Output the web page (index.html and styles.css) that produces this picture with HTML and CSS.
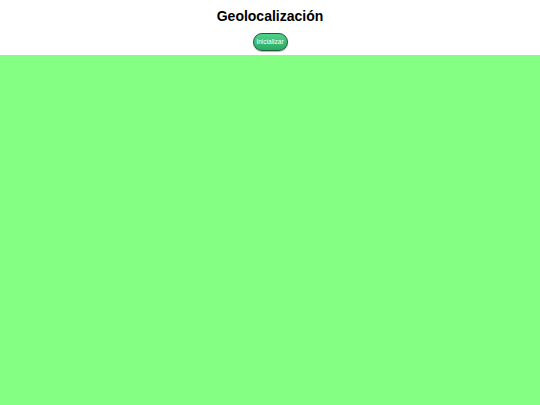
FILE: index.html
```html
<!DOCTYPE html>
<html lang="es">
<head>
<meta charset="utf-8">
<title>Geolocalización</title>
<link rel="stylesheet" href="styles.css">
</head>
<body>
<header class="header">
  <h1 class="title">Geolocalización</h1>
  <button class="btn">Inicializar</button>
</header>
<div class="map"></div>
</body>
</html>
```
FILE: styles.css
```css
html, body {
  margin: 0;
  padding: 0;
  height: 100%;
}
body {
  font-family: "Liberation Sans", Arial, sans-serif;
  display: flex;
  flex-direction: column;
  background: #fff;
}
.header {
  display: flex;
  flex-direction: column;
  align-items: center;
  padding: 8px 0 4px;
  gap: 9px;
}
.title {
  margin: 0;
  font-size: 14px;
  line-height: 16px;
  font-weight: bold;
  color: #000;
}
.btn {
  height: 18px;
  width: 35px;
  padding: 0;
  border: 1px solid #1f5a3a;
  border-radius: 9px;
  background: linear-gradient(#4fd38a, #2aa866);
  color: #fff;
  font-family: "Liberation Sans", Arial, sans-serif;
  font-size: 6.5px;
  line-height: 16px;
  box-shadow: 0 1px 1px rgba(0,0,0,0.3);
}
.map {
  flex: 1;
  background: #84ff84;
}
```
